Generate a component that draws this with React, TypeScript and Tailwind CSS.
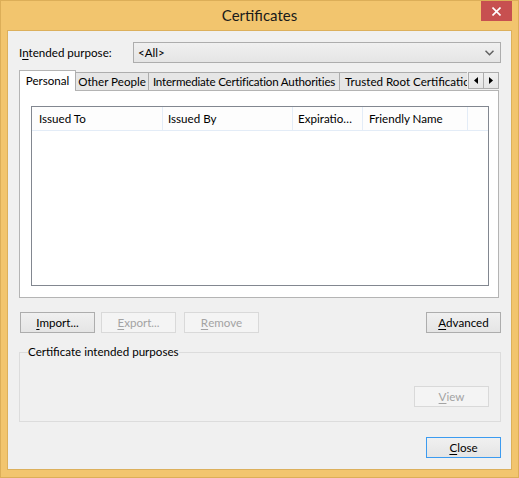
import React from "react";

function Btn({
  children,
  kind = "normal",
  className = "",
}: {
  children: React.ReactNode;
  kind?: "normal" | "disabled" | "default";
  className?: string;
}) {
  const k =
    kind === "disabled"
      ? "border-[#d9d9d9] bg-[#f4f4f4] text-[#a3a3a3]"
      : kind === "default"
      ? "border-[#3c9bf0] bg-linear-to-b from-[#f0f0f0] to-[#e5e5e5] text-black"
      : "border-[#adadad] bg-linear-to-b from-[#f0f0f0] to-[#e5e5e5] text-black";
  return (
    <div
      className={
        "h-[21px] w-[75px] shrink-0 border flex items-center justify-center leading-none " +
        k +
        " " +
        className
      }
    >
      {children}
    </div>
  );
}

function U({ children }: { children: React.ReactNode }) {
  return <span className="underline underline-offset-[2px]">{children}</span>;
}

export default function App() {
  return (
    <div className="w-[519px] h-[478px] bg-[#f2c56e] border border-[#dcae58] flex flex-col px-[6px] pb-[7px] font-['Lato',sans-serif] text-[11.6px] text-black">
      {/* Title bar */}
      <div className="h-[29px] grid grid-cols-[31px_1fr_31px] shrink-0">
        <div />
        <div className="flex items-center justify-center text-[15px] text-[#1a1a1a] pb-[1px]">
          Certificates
        </div>
        <div className="h-[20px] w-[31px] bg-[#c75050] flex items-center justify-center">
          <svg width="9" height="9" viewBox="0 0 9 9">
            <path d="M0.5 0.5 L8.5 8.5 M8.5 0.5 L0.5 8.5" stroke="#fff" strokeWidth="1.6" />
          </svg>
        </div>
      </div>

      {/* Client */}
      <div className="flex-1 bg-[#f0f0f0] border border-[#dcb05c] pl-[11px] pr-[10px] pt-[11px] flex flex-col">
        {/* Intended purpose */}
        <div className="flex items-center h-[21px]">
          <div className="w-[114px] shrink-0 whitespace-nowrap">
            I<U>n</U>tended purpose:
          </div>
          <div className="flex-1 h-[21px] border border-[#adadad] bg-linear-to-b from-[#f0f0f0] to-[#e5e5e5] flex items-center pl-[4px] pr-[6px]">
            <span>&lt;All&gt;</span>
            <svg className="ml-auto" width="9" height="6" viewBox="0 0 9 6">
              <path d="M0.5 0.8 L4.5 4.8 L8.5 0.8" stroke="#606060" strokeWidth="1.5" fill="none" />
            </svg>
          </div>
        </div>

        {/* Tabs */}
        <div className="mt-[7px] h-[21px] -mb-px flex items-end relative z-10 mr-[2px]">
          <div className="w-[449px] h-full flex items-end overflow-hidden">
            <div className="h-[21px] w-[57px] shrink-0 bg-white border border-b-0 border-[#b4b4b4] flex items-center justify-center pb-[1px] whitespace-nowrap">
              Personal
            </div>
            <div className="h-[18px] mb-px -ml-px w-[74px] shrink-0 border border-b-0 border-[#adadad] bg-[#e6e6e6] flex items-center justify-center whitespace-nowrap">
              Other People
            </div>
            <div className="h-[18px] mb-px -ml-px w-[192px] shrink-0 border border-b-0 border-[#adadad] bg-[#e6e6e6] flex items-center justify-center whitespace-nowrap tracking-[-0.2px]">
              Intermediate Certification Authorities
            </div>
            <div className="h-[18px] mb-px -ml-px w-[150px] shrink-0 border border-b-0 border-[#adadad] bg-[#e6e6e6] flex items-center pl-[5px] whitespace-nowrap">
              Trusted Root Certification Authorities
            </div>
          </div>
          <div className="ml-px mb-[2px] flex">
            <div className="h-[17px] w-[16px] border border-[#adadad] bg-linear-to-b from-[#f0f0f0] to-[#e5e5e5] flex items-center justify-center">
              <svg width="4" height="7" viewBox="0 0 4 7">
                <path d="M4 0 L0 3.5 L4 7 Z" fill="#000" />
              </svg>
            </div>
            <div className="h-[17px] w-[16px] -ml-px border border-[#adadad] bg-linear-to-b from-[#f0f0f0] to-[#e5e5e5] flex items-center justify-center">
              <svg width="4" height="7" viewBox="0 0 4 7">
                <path d="M0 0 L4 3.5 L0 7 Z" fill="#000" />
              </svg>
            </div>
          </div>
        </div>

        {/* Panel */}
        <div className="mr-[2px] border border-[#b4b4b4] bg-white pl-[11px] pr-[9px] pt-[15px] pb-[11px]">
          <div className="h-[180px] border border-[#828790] bg-white flex flex-col">
            <div className="h-[24px] border-b border-[#e3ecf7] bg-[#fdfdfd] flex shrink-0">
              <div className="w-[131px] shrink-0 border-r border-[#e3ecf7] pl-[7px] flex items-center">Issued To</div>
              <div className="w-[130px] shrink-0 border-r border-[#e3ecf7] pl-[5px] flex items-center">Issued By</div>
              <div className="w-[70px] shrink-0 border-r border-[#e3ecf7] pl-[5px] flex items-center whitespace-nowrap overflow-hidden">Expiratio…</div>
              <div className="w-[105px] shrink-0 border-r border-[#e3ecf7] pl-[6px] flex items-center whitespace-nowrap">Friendly Name</div>
              <div className="flex-1" />
            </div>
          </div>
        </div>

        {/* Buttons row */}
        <div className="mt-[14px] flex">
          <Btn className="ml-px">
            <U>I</U>mport...
          </Btn>
          <Btn kind="disabled" className="ml-[6px]">
            <U>E</U>xport...
          </Btn>
          <Btn kind="disabled" className="ml-[8px]">
            <U>R</U>emove
          </Btn>
          <Btn className="ml-auto">
            <U>A</U>dvanced
          </Btn>
        </div>

        {/* Group box */}
        <fieldset className="mt-[11px] border border-[#dcdcdc] pb-[14px] pr-[11px]">
          <legend className="ml-[8px] leading-[16px] px-0">Certificate intended purposes</legend>
          <div className="mt-[26px] flex justify-end">
            <Btn kind="disabled">
              <U>V</U>iew
            </Btn>
          </div>
        </fieldset>

        <div className="mt-[15px] flex justify-end">
          <Btn kind="default">
            <U>C</U>lose
          </Btn>
        </div>
      </div>
    </div>
  );
}
